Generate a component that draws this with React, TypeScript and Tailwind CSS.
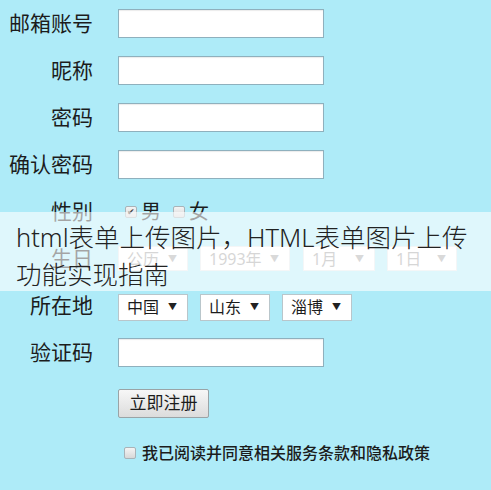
import React from 'react';

const font = { fontFamily: '"Noto Sans", "Noto Sans CJK SC", sans-serif' };

function Label({ text }: { text: string }) {
  return (
    <div className="w-[93px] shrink-0 text-right text-[21px] leading-none text-[#1c1c1c]">{text}</div>
  );
}

function Row({ label, children }: { label: string; children?: React.ReactNode }) {
  return (
    <div className="flex h-[47px] items-center">
      <Label text={label} />
      <div className="ml-[25px] flex items-center">{children}</div>
    </div>
  );
}

function TextBox() {
  return <div className="h-[29px] w-[206px] border border-[#8fb0bd] bg-white shadow-[inset_0_1px_1px_rgba(0,0,0,0.08)]" />;
}

function Select({ text, width, faded }: { text: string; width: string; faded?: boolean }) {
  return (
    <div
      className={`flex items-center justify-between border bg-white pl-2 pr-[10px] text-[16px] ${width} ${
        faded ? 'h-[25px] border-[#e3e8ea] text-[#9a9a9a]' : 'h-[27px] border-[#b9c6cb] text-[#1c1c1c]'
      }`}
    >
      <span>{text}</span>
      <span className={`text-[9px] ${faded ? 'text-[#a0a0a0]' : 'text-[#222]'}`}>▼</span>
    </div>
  );
}

function Box({ checked }: { checked?: boolean }) {
  return (
    <span className="flex h-[12px] w-[12px] items-center justify-center rounded-[2px] border border-[#a9b3b8] bg-gradient-to-b from-[#f4f4f4] to-[#d8d8d8]">
      {checked && <span className="text-[9px] leading-none text-[#444]">✔</span>}
    </span>
  );
}

export default function App() {
  return (
    <div className="relative h-[490px] w-[491px] overflow-hidden bg-[#aeebf8]" style={font}>
      <div className="flex flex-col">
        <Row label="邮箱账号"><TextBox /></Row>
        <Row label="昵称"><TextBox /></Row>
        <Row label="密码"><TextBox /></Row>
        <Row label="确认密码"><TextBox /></Row>
        <Row label="性别">
          <div className="flex items-center gap-[4px] text-[20px] text-[#1c1c1c]">
            <span className="ml-[7px]"><Box checked /></span>
            <span>男</span>
            <span className="ml-[8px]"><Box /></span>
            <span>女</span>
          </div>
        </Row>
        <Row label="生日">
          <div className="flex items-center">
            <Select text="公历" width="w-[70px]" faded />
            <div className="ml-[12px]"><Select text="1993年" width="w-[90px]" faded /></div>
            <div className="ml-[13px]"><Select text="1月" width="w-[72px]" faded /></div>
            <div className="ml-[12px]"><Select text="1日" width="w-[70px]" faded /></div>
          </div>
        </Row>
        <Row label="所在地">
          <div className="flex items-center gap-[12px] pt-[3px]">
            <Select text="中国" width="w-[70px]" />
            <Select text="山东" width="w-[70px]" />
            <Select text="淄博" width="w-[70px]" />
          </div>
        </Row>
        <Row label="验证码"><TextBox /></Row>
        <div className="flex h-[49px] items-center pl-[118px] pt-[5px]">
          <button className="h-[29px] w-[91px] rounded-[2px] border border-[#9aa3a6] bg-gradient-to-b from-[#f7f7f7] to-[#dcdcdc] text-[17px] text-[#1c1c1c]">
            立即注册
          </button>
        </div>
        <div className="flex h-[50px] items-center pl-[124px] pt-[5px]">
          <Box />
          <span className="ml-[6px] text-[16px] font-medium text-[#1c1c1c]">我已阅读并同意相关服务条款和隐私政策</span>
        </div>
      </div>

      <div className="absolute left-0 top-[212px] h-[79px] w-full bg-white/60 pl-[16px] pt-[7px] text-[25.5px] font-light leading-[37px] text-[#222]">
        html表单上传图片，HTML表单图片上传<br />
        功能实现指南
      </div>
    </div>
  );
}
